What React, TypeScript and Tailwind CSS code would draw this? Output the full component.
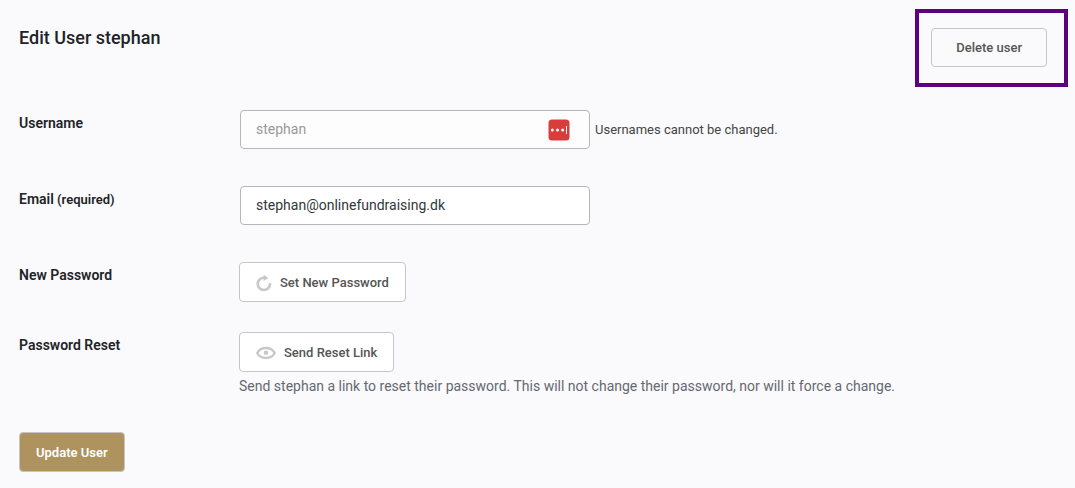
import React, { useState } from 'react';

const buttonBase =
  'inline-flex cursor-pointer items-center gap-2 rounded border border-[#c6c6c8] pt-px text-[13px] leading-5';

const inputBase =
  'h-[39px] w-full rounded border border-[#b6b6ba] px-[15px] pb-0.5 text-sm';

interface FieldRowProps {
  label: string;
  note?: string;
  htmlFor: string;
  children: React.ReactNode;
}

const FieldRow: React.FC<FieldRowProps> = ({ label, note, htmlFor, children }) => (
  <div className="flex items-start">
    <label
      htmlFor={htmlFor}
      className="w-[220px] shrink-0 pt-[3px] text-sm leading-5 font-semibold text-[#1d2327]"
    >
      {label}
      {note && <span className="text-[13px]"> {note}</span>}
    </label>
    <div className="min-w-0 flex-1">{children}</div>
  </div>
);

const ResetIcon = () => (
  <svg width="16" height="16" viewBox="0 0 16 16" fill="none" aria-hidden="true">
    <path d="M13.9 8.2A6.1 6.1 0 1 1 8.6 2.8" stroke="#c8c8c8" strokeWidth="2.6" />
    <path d="M7.6 -0.4v6.4l4.8-3z" fill="#c8c8c8" />
  </svg>
);

const EyeIcon = () => (
  <svg width="20" height="14" viewBox="0 0 20 14" fill="none" aria-hidden="true">
    <path
      d="M1.3 7C3 3.7 6.2 2 10 2s7 1.7 8.7 5c-1.7 3.3-4.9 5-8.7 5S3 10.3 1.3 7z"
      stroke="#c8c8c8"
      strokeWidth="2.4"
    />
    <circle cx="10" cy="6.8" r="2.3" fill="#c8c8c8" />
  </svg>
);

// Password manager badge shown inside the username field
const PasswordManagerIcon = () => (
  <svg
    width="22"
    height="22"
    viewBox="0 0 22 22"
    className="pointer-events-none absolute top-[9px] right-5"
    aria-hidden="true"
  >
    <rect x="0.5" y="0.5" width="21" height="21" rx="3.5" fill="#d93d3b" />
    <circle cx="4.3" cy="11" r="1.5" fill="#fff" />
    <circle cx="9.5" cy="11" r="1.5" fill="#fff" />
    <circle cx="14.7" cy="11" r="1.5" fill="#fff" />
    <rect x="18" y="7" width="1" height="8" fill="#fff" />
  </svg>
);

export default function App() {
  const [email, setEmail] = useState('stephan@onlinefundraising.dk');

  return (
    <main className="min-h-screen bg-[#fafafc] px-[19px] pb-4 font-[Roboto,'Liberation_Sans',sans-serif]">
      <header className="-mr-3 flex items-start justify-between pt-[9px]">
        <h1 className="pt-[15px] text-lg leading-7 font-medium text-[#1d2327]">Edit User stephan</h1>
        <div className="flex border-4 border-[#5c0080] pt-[15px] pr-[17px] pb-4 pl-3">
          <button type="button" className={`${buttonBase} h-[39px] px-6 font-medium text-[#555]`}>
            Delete user
          </button>
        </div>
      </header>

      <form className="mt-[23px]" onSubmit={(e) => e.preventDefault()}>
        <div className="flex flex-col gap-[30px]">
          <FieldRow label="Username" htmlFor="username">
            <div className="flex min-h-[46px] flex-wrap items-start gap-x-[5px] pl-px">
              <div className="relative w-full max-w-[350px]">
                <input
                  id="username"
                  type="text"
                  disabled
                  defaultValue="stephan"
                  className={`${inputBase} bg-[#fdfdfd] text-[#999]`}
                />
                <PasswordManagerIcon />
              </div>
              <span className="text-[13px] leading-[39px] text-[#444]">Usernames cannot be changed.</span>
            </div>
          </FieldRow>

          <FieldRow label="Email" note="(required)" htmlFor="email">
            <div className="min-h-[46px] max-w-[351px] pl-px">
              <input
                id="email"
                type="email"
                required
                value={email}
                onChange={(e) => setEmail(e.target.value)}
                className={`${inputBase} bg-white text-[#32373c]`}
              />
            </div>
          </FieldRow>

          <FieldRow label="New Password" htmlFor="new-password">
            <button
              id="new-password"
              type="button"
              className={`${buttonBase} h-10 bg-white px-4 font-medium text-[#555]`}
            >
              <ResetIcon />
              Set New Password
            </button>
          </FieldRow>

          <FieldRow label="Password Reset" htmlFor="password-reset">
            <button
              id="password-reset"
              type="button"
              className={`${buttonBase} h-10 bg-white px-4 font-medium text-[#555]`}
            >
              <EyeIcon />
              Send Reset Link
            </button>
            <p className="mt-1 text-sm leading-5 text-[#646970]">
              Send stephan a link to reset their password. This will not change their password, nor will it force a change.
            </p>
          </FieldRow>
        </div>

        <button
          type="submit"
          className={`${buttonBase} mt-9 h-10 bg-[#ae935f] px-4 font-semibold text-white`}
        >
          Update User
        </button>
      </form>
    </main>
  );
}
